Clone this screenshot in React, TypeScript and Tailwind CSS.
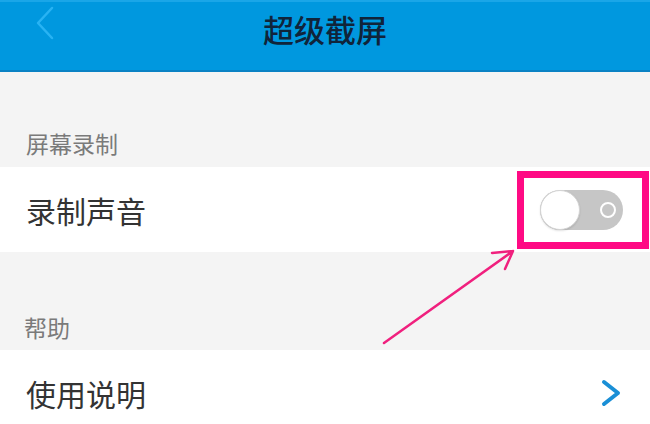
const font = { fontFamily: '"Noto Sans CJK SC", "Noto Sans", sans-serif' };

function Toggle() {
  return (
    <div className="relative h-[40px] w-[83px] rounded-full bg-[#c6c6c6]">
      <div className="absolute left-0 top-0 h-[40px] w-[40px] rounded-full border border-[#d4d4d4] bg-white shadow-[0_1px_2px_rgba(0,0,0,0.12)]" />
      <div className="absolute right-[7px] top-[12px] h-[16px] w-[16px] rounded-full border-[2.5px] border-white" />
    </div>
  );
}

export default function App() {
  return (
    <div className="relative h-[424px] w-[650px] overflow-hidden bg-[#f4f4f4]" style={font}>
      <header className="relative flex h-[72px] items-center justify-center border-t-2 border-b-2 border-t-[#1aa6e8] border-b-[#0a82c4] bg-[#0098df]">
        <svg className="absolute left-[34px] top-[4px]" width="22" height="34" viewBox="0 0 22 34">
          <path d="M18 2 L4 17 L18 32" fill="none" stroke="#29b3f3" strokeWidth="2.5" strokeLinecap="round" strokeLinejoin="round" />
        </svg>
        <h1 className="mb-[16px] text-[31px] font-medium leading-none text-[#10243a]">超级截屏</h1>
      </header>

      <div className="flex h-[95px] items-end px-[26px] pb-[7px]">
        <span className="text-[23px] leading-[34px] text-[#7a7a7a]">屏幕录制</span>
      </div>

      <div className="flex h-[85px] items-center bg-white pl-[26px] pr-[1px]">
        <span className="text-[30px] leading-none text-[#333333]">录制声音</span>
        <div className="ml-auto flex h-[78px] w-[132px] items-center justify-center border-[7px] border-[#ff0a84] pr-[3px]">
          <Toggle />
        </div>
      </div>

      <div className="flex h-[98px] items-end px-[24px] pb-[6px]">
        <span className="text-[23px] leading-[34px] text-[#7a7a7a]">帮助</span>
      </div>

      <div className="flex h-[85px] items-center bg-white pl-[26px] pr-[28px]">
        <span className="text-[30px] leading-none text-[#333333]">使用说明</span>
        <svg className="ml-auto" width="22" height="28" viewBox="0 0 22 28">
          <path d="M4 3 L18 14 L4 25" fill="none" stroke="#1a8fd6" strokeWidth="4" strokeLinecap="round" strokeLinejoin="round" />
        </svg>
      </div>

      <svg className="pointer-events-none absolute left-0 top-0" width="650" height="424" viewBox="0 0 650 424">
        <path d="M384 343 L513 251 M513 251 L492 253 M513 251 L505 269" fill="none" stroke="#f0207e" strokeWidth="2.5" strokeLinecap="round" />
      </svg>
    </div>
  );
}
